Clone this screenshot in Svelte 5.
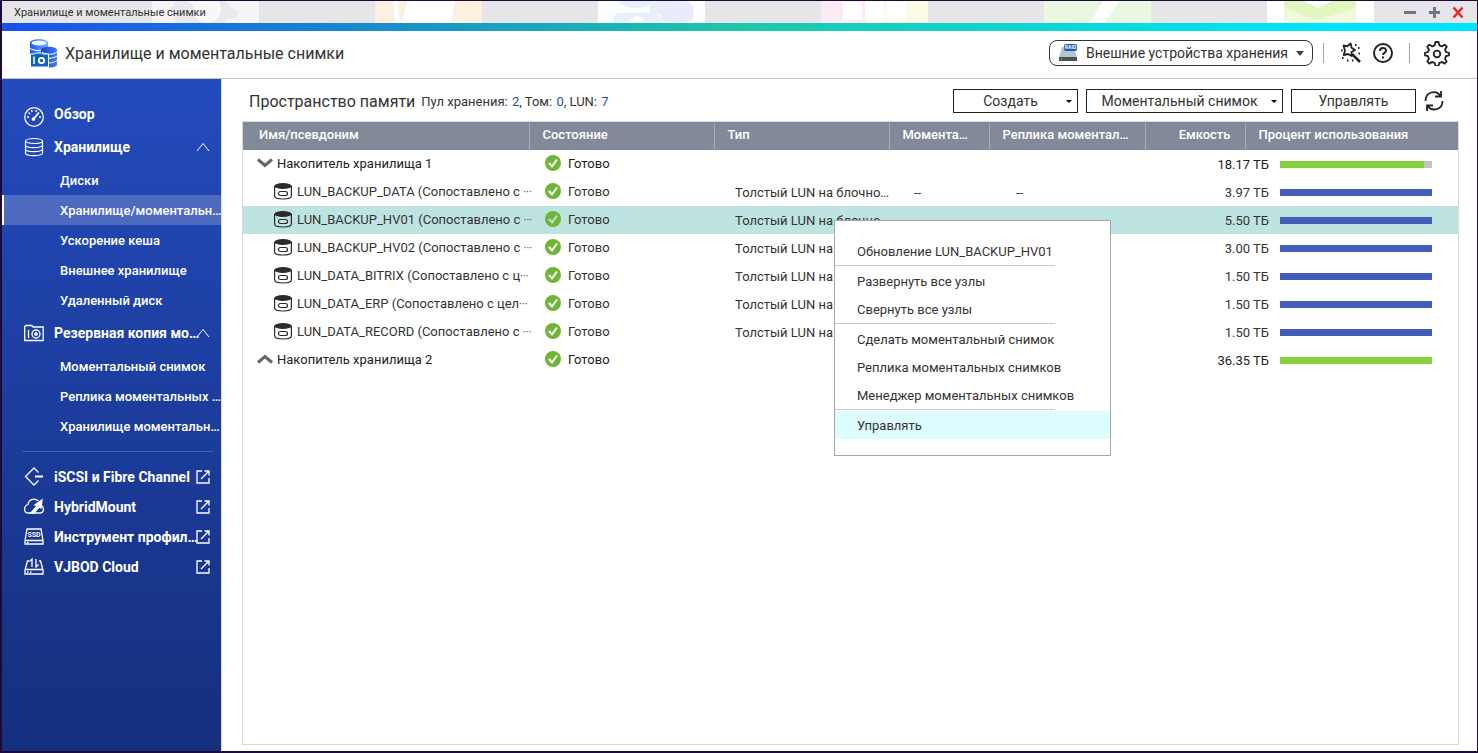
<script>
  // Storage & Snapshots window
  let selected = $state("LUN_BACKUP_HV01");
  let showMenu = $state(true);

  const storageItems = [
    "Диски",
    "Хранилище/моментальн…",
    "Ускорение кеша",
    "Внешнее хранилище",
    "Удаленный диск",
  ];
  let activeItem = $state(storageItems[1]);

  const backupItems = ["Моментальный снимок", "Реплика моментальных …", "Хранилище моментальн…"];

  const tools = [
    { icon: "iscsi", label: "iSCSI и Fibre Channel" },
    { icon: "cloud", label: "HybridMount" },
    { icon: "ssd", label: "Инструмент профил…" },
    { icon: "vjbod", label: "VJBOD Cloud" },
  ];

  const type = "Толстый LUN на блочно…";
  const rows = [
    { name: "Накопитель хранилища 1", pool: true, open: true, size: "18.17 ТБ", used: 95 },
    { name: "LUN_BACKUP_DATA", note: "(Сопоставлено с ", size: "3.97 ТБ", used: 100 },
    { name: "LUN_BACKUP_HV01", note: "(Сопоставлено с ", size: "5.50 ТБ", used: 100 },
    { name: "LUN_BACKUP_HV02", note: "(Сопоставлено с ", size: "3.00 ТБ", used: 100 },
    { name: "LUN_DATA_BITRIX", note: "(Сопоставлено с ц", size: "1.50 ТБ", used: 100 },
    { name: "LUN_DATA_ERP", note: "(Сопоставлено с цел", size: "1.50 ТБ", used: 100 },
    { name: "LUN_DATA_RECORD", note: "(Сопоставлено с ", size: "1.50 ТБ", used: 100 },
    { name: "Накопитель хранилища 2", pool: true, open: false, size: "36.35 ТБ", used: 100 },
  ];

  const menuGroups = [
    ["Обновление LUN_BACKUP_HV01"],
    ["Развернуть все узлы", "Свернуть все узлы"],
    ["Сделать моментальный снимок", "Реплика моментальных снимков", "Менеджер моментальных снимков"],
    ["Управлять"],
  ];

  function handleKeydown(event) {
    if (event.key === "Escape") {
      showMenu = false;
    }
  }
</script>

<svelte:window onkeydown={handleKeydown} />

{#snippet subItem(label)}
  <button class="sub-item" class:active={label === activeItem} onclick={() => (activeItem = label)}>
    {label}
  </button>
{/snippet}

{#snippet collapse()}
  <svg class="collapse" width="14" height="10" viewBox="0 0 14 10" fill="none" stroke="#fff">
    <path d="M1 9l6-7.500 6 7.500" />
  </svg>
{/snippet}

<div class="desktop">
  <div class="window">
    <div class="titlebar">
      <!-- desktop icons showing through the translucent bar -->
      <svg class="behind" width="1474" height="22" viewBox="2 1 1474 22">
        <path d="M152 1h107v22H152z" fill="#f5f5f5" />
        <path d="M174 1h12l6 4h16l6-4h12l4 6 9 4-3 7-9 1-3 4h-46l-4-6-4-2-2-5 6-5z" fill="#e9eaeb" />
        <circle cx="207" cy="9" r="14" fill="#f8f8f8" />
        <path d="M375 1h107v22H375z" fill="#fdf0e0" />
        <path d="M393 1h5l2 22h-5zM407 1h48l-4 22h-49z" fill="#fff" />
        <path d="M598 1h107v22H598z" fill="#fdfeff" />
        <path d="M619 1h34c0 4-8 7-17 7s-17-3-17-7z" fill="#e4f0ff" />
        <path d="M650 7c0-10 43-10 43 0v12c-4 5-32 5-32 0v-5h-11z" fill="#e9ecfc" />
        <path d="M613 23v-6l5-4h36l7 4v6z" fill="#e6f0f8" />
        <path d="M630 23c0-9 14-9 14 0z" fill="#fff" />
        <path d="M821 1h107v22H821z" fill="#fcfbe8" />
        <path d="M821 1h46v22h-46z" fill="#fcebf4" />
        <path d="M843 2h19v18h-19zM865 2h19v18h-19zM887 2h19v18h-19z" fill="#fff" />
        <path d="M1044 1h107v22h-107z" fill="#eaf7e2" />
        <path d="M1103 1h17l-16 22h-14z" fill="#fff" />
        <path d="M1267 1h107v22h-107z" fill="#fff" />
        <path d="M1284 1h72v22h-72z" fill="#f1fbdc" />
        <path d="M1284 1h72v7l-38 12-34-12z" fill="#e0f7bf" />
        <path d="M1304 1h28l-14 7z" fill="#fff" />
      </svg>
      <span class="caption">Хранилище и моментальные снимки</span>
      <div class="window-buttons">
        <button aria-label="Свернуть">
          <svg width="12" height="12" viewBox="0 0 12 12"><path d="M0 5h12v3H0z" fill="#6d7880" /></svg>
        </button>
        <button aria-label="Развернуть">
          <svg width="12" height="12" viewBox="0 0 12 12">
            <path d="M1 6.500h11M6.500 1v11" stroke="#6d7880" stroke-width="3" />
          </svg>
        </button>
        <button aria-label="Закрыть">
          <svg width="12" height="12" viewBox="0 0 12 12">
            <path d="M1.500 1.500l9 10M10.500 1.500l-9 10" stroke="#ee2525" stroke-width="2.500" />
          </svg>
        </button>
      </div>
    </div>
    <div class="stripe"></div>

    <header class="header">
      <svg width="28" height="29" viewBox="0 0 28 29">
        <defs>
          <linearGradient id="disk" x1="0" x2="1">
            <stop offset="0" stop-color="#1b5cf0" />
            <stop offset="1" stop-color="#63b4ff" />
          </linearGradient>
          <linearGradient id="disk2" x1="0" x2="1">
            <stop offset="0" stop-color="#1a45c4" />
            <stop offset="1" stop-color="#3f7dff" />
          </linearGradient>
        </defs>
        <path d="M1 4c0-5 18-5 18 0v13H1z" fill="url(#disk)" />
        <ellipse cx="10" cy="4" rx="7.500" ry="2.500" fill="#f2f8ff" />
        <path d="M1 9c3 3.500 15 3.500 18 0" fill="none" stroke="#fff" />
        <path d="M12 11c0-4.500 16-4.500 16 0v15c-1 2-6 3-9 2h-7z" fill="url(#disk2)" />
        <path d="M13 13c3 3 12 3 15 0M18 19.500c4 0 8-1 10-2.500M20 24c3 0 6-1 8-2.500" fill="none" stroke="#fff" />
        <path d="M1.500 15h4l1-1h6l1 1h6v13h-18z" fill="#1264b8" stroke="#fff" />
        <path d="M5 17.500v7.500" stroke="#fff" stroke-width="1.500" />
        <circle cx="12.500" cy="21.500" r="2.700" fill="none" stroke="#fff" stroke-width="1.800" />
      </svg>
      <h1>Хранилище и моментальные снимки</h1>

      <button class="external" aria-haspopup="menu">
        <svg width="20" height="20" viewBox="0 0 20 20">
          <path d="M4 4h12l3 11H1z" fill="#b8c3d0" />
          <path d="M1 14h18v4H1z" fill="#4c5159" />
          <path d="M3 16h1" stroke="#7fe040" />
          <rect x="6" y="1" width="13" height="7" rx="2" fill="#1d5fb4" />
          <text x="12.500" y="6" text-anchor="middle" class="tiny" fill="#fff">RAID</text>
        </svg>
        <span>Внешние устройства хранения</span>
        <svg width="8" height="5" viewBox="0 0 8 5"><path d="M0 0h8L4 5z" fill="#444" /></svg>
      </button>
      <i class="divider"></i>
      <div class="pair">
        <button class="icon-btn" aria-label="Мастер">
          <svg width="22" height="22" viewBox="0 0 22 22" fill="none" stroke="#222" stroke-width="1.800">
            <path
              d="M3.500 3.500l3.700.8 3.500-2.800.8 4.200 3.500 2.300-3.500 2 .2 4-3.700-2-4.300 1 1.300-4.300z"
              stroke-linejoin="round"
            />
            <path d="M12 12l8 8" stroke-width="2.500" />
            <path d="M15 3h1.500M18 6h1.500M18.500 11.500H20M2 16h1.500M7 18.500h1.500M12 18.500h1.500M1 8.500h1.500" />
          </svg>
        </button>
        <button class="icon-btn" aria-label="Справка">
          <svg width="22" height="22" viewBox="0 0 22 22" fill="none" stroke="#222" stroke-width="2">
            <circle cx="11" cy="11" r="9" />
            <path d="M8 9c0-4 6-4 6-.5 0 2.500-3 2.200-3 4.500" />
            <path d="M11 14.500v2" />
          </svg>
        </button>
      </div>
      <i class="divider last"></i>
      <button class="icon-btn" aria-label="Параметры">
        <svg width="26" height="26" viewBox="0 0 26 26" fill="none" stroke="#222" stroke-width="1.800" stroke-linejoin="round">
          <path
            d="M11.500 2h3l.8 3.300c1 .3 1.600.6 2.400 1.100l3-1.700 2 2-1.700 3c.5.800.8 1.500 1 2.300l3 .8v2.600l-3 .8c-.2.900-.5 1.600-1 2.400l1.700 3-2 2-3-1.700c-.8.5-1.500.8-2.400 1l-.8 3.100h-3l-.8-3.100c-.9-.2-1.600-.5-2.400-1l-3 1.700-2-2 1.700-3c-.5-.8-.8-1.500-1-2.400l-3-.8v-2.600l3-.8c.2-.8.5-1.500 1-2.300l-1.700-3 2-2 3 1.700c.8-.5 1.400-.8 2.400-1.100z"
          />
          <circle cx="13" cy="14" r="3.300" />
        </svg>
      </button>
    </header>

    <div class="body">
      <nav class="sidebar">
        <button class="item first">
          <svg width="22" height="22" viewBox="0 0 22 22" fill="none" stroke="#fff" stroke-width="1.300">
            <circle cx="11" cy="11" r="9.300" />
            <path d="M4 11h2M5.500 6.500L7 8M8.500 4l.7 2M13.500 4l-.7 2M16 11h2" />
            <path d="M11 12.500l5-6" stroke-width="1.800" />
            <circle cx="10.500" cy="13" r="1.200" fill="#fff" />
          </svg>
          <span>Обзор</span>
        </button>
        <button class="item">
          <svg width="22" height="22" viewBox="0 0 22 22" fill="none" stroke="#fff" stroke-width="1.200">
            <ellipse cx="11" cy="5" rx="8.500" ry="2.500" />
            <path d="M2.500 5v12c0 3.500 17 3.500 17 0V5M2.500 9c0 3.500 17 3.500 17 0M2.500 13c0 3.500 17 3.500 17 0" />
          </svg>
          <span>Хранилище</span>
          {@render collapse()}
        </button>
        {#each storageItems as label}
          {@render subItem(label)}
        {/each}
        <button class="item">
          <svg width="22" height="22" viewBox="0 0 22 22" fill="none" stroke="#fff" stroke-width="1.300">
            <path d="M1.700 18.500V4.500l1-1h6l1.500 1.500h10v13.500zM5.500 8v8" />
            <circle cx="13" cy="12" r="4" />
            <circle cx="13" cy="12" r="1.200" fill="#fff" />
          </svg>
          <span>Резервная копия мо…</span>
          {@render collapse()}
        </button>
        {#each backupItems as label}
          {@render subItem(label)}
        {/each}
        <hr />
        {#each tools as tool}
          <a class="item tool" href="#{tool.icon}">
            <svg width="22" height="22" viewBox="0 0 22 22" fill="none" stroke="#fff" stroke-width="1.300">
              {#if tool.icon === "iscsi"}
                <path d="M15.500 6.500L11 2l-8.500 8.500L11 19l4.500-4.500" />
                <path d="M12 10.500h8" stroke-width="2" />
              {:else if tool.icon === "cloud"}
                <path d="M15.500 5C11 1.500 5.500 3.500 5 8.500c-4.500 1.500-4.500 8 0 8.500h3M18.500 9.500c3 2 2.500 7-1 7.500H9" />
                <path d="M8 17l6-7-2-1 7-5-1 8-2-1-5 6z" fill="#fff" />
              {:else if tool.icon === "ssd"}
                <path d="M4 3h14l2 11.500V18H2v-3.500zM2 14.500h18M4 16.300h1.500" />
                <text x="11" y="11" text-anchor="middle" class="ssd" fill="#fff" stroke="none">SSD</text>
              {:else}
                <path d="M6 5H4.500L2 14v4h18v-4L17.500 5H16M2 13.500h18M4 16h1.500M7 16h1.500" />
                <path d="M9 11V3L6.500 5.500M13 3v8l2.500-2.500" />
              {/if}
            </svg>
            <span>{tool.label}</span>
            <svg class="open" width="14" height="14" viewBox="0 0 14 14" fill="none" stroke="#fff" stroke-width="1.300">
              <path d="M6 1H1v12h12V8M8.500 1H13v4.500M13 1L5 9" />
            </svg>
          </a>
        {/each}
      </nav>

      <main class="content">
        <div class="toolbar">
          <h2>Пространство памяти</h2>
          <p>
            Пул хранения: <a href="#pools">2</a>, Том: <a href="#volumes">0</a>, LUN: <a href="#luns">7</a>
          </p>
          <div class="actions">
            <button class="btn has-arrow" aria-haspopup="menu">Создать</button>
            <button class="btn has-arrow wide" aria-haspopup="menu">Моментальный снимок</button>
            <button class="btn">Управлять</button>
            <button class="icon-btn" aria-label="Обновить">
              <svg width="20" height="24" viewBox="0 0 20 24" fill="none" stroke="#222" stroke-width="1.800">
                <path d="M1.500 12C1.500 3 12 0 16.500 7M17 2v5.500h-6" />
                <path d="M18.500 12c0 9-10.500 11-15 5M3 22v-5.500h6" />
              </svg>
            </button>
          </div>
        </div>

        <div class="grid">
          <table>
            <colgroup>
              <col class="c-name" />
              <col class="c-state" />
              <col class="c-type" />
              <col class="c-snap" />
              <col class="c-replica" />
              <col class="c-size" />
              <col />
            </colgroup>
            <thead>
              <tr>
                <th class="name-head">Имя/псевдоним</th>
                <th>Состояние</th>
                <th>Тип</th>
                <th>Момента…</th>
                <th>Реплика моментал…</th>
                <th class="size-head">Емкость</th>
                <th>Процент использования</th>
              </tr>
            </thead>
            <tbody>
              {#each rows as row}
                <tr
                  class:pool={row.pool}
                  class:selected={row.name === selected}
                  onclick={() => (selected = row.name)}
                >
                  <td>
                    <div class="name" class:lun={!row.pool}>
                      {#if row.pool}
                        <svg width="16" height="10" viewBox="0 0 16 10" fill="none" stroke="#666" stroke-width="3">
                          <path d={row.open ? "M1 1.500l7 6 7-6" : "M1 8.500l7-6 7 6"} />
                        </svg>
                        <span>{row.name}</span>
                      {:else}
                        <svg width="18" height="18" viewBox="0 0 18 18" fill="none" stroke="#2b2b2b" stroke-width="1.200">
                          <path d="M.6 4v10c0 4 16.800 4 16.800 0V4" />
                          <ellipse cx="9" cy="4" rx="8.800" ry="3" fill="#2b2b2b" stroke="none" />
                          <rect x="4.500" y="9.500" width="9" height="4" rx="2" />
                        </svg>
                        <span>{row.name} {row.note}<small>···</small></span>
                      {/if}
                    </div>
                  </td>
                  <td>
                    <div class="state">
                      <svg width="16" height="16" viewBox="0 0 16 16">
                        <circle cx="8" cy="8" r="8" fill="#6fb536" />
                        <path
                          d="M4 8l3 3.500 5-7"
                          fill="none"
                          stroke={row.name === selected ? "#bee4e2" : "#fff"}
                          stroke-width="2"
                        />
                      </svg>
                      <span>Готово</span>
                    </div>
                  </td>
                  <td class="type">{row.pool ? "" : type}</td>
                  <td class="snap">{row.pool ? "" : "--"}</td>
                  <td class="replica">{row.pool ? "" : "--"}</td>
                  <td class="size"><div>{row.size}</div></td>
                  <td class="usage">
                    <div class="bar"><div class="fill" style="width: {row.used}%"></div></div>
                  </td>
                </tr>
              {/each}
            </tbody>
          </table>
        </div>
      </main>
    </div>
  </div>

  {#if showMenu}
    <div class="menu" role="menu">
      {#each menuGroups as group}
        <div class="group">
          {#each group as label}
            <button role="menuitem" class:hover={label === "Управлять"} onclick={() => (showMenu = false)}>
              {label}
            </button>
          {/each}
        </div>
      {/each}
    </div>
  {/if}
</div>

<style>
  :global(body) {
    margin: 0;
  }

  .desktop {
    position: relative;
    box-sizing: border-box;
    display: flex;
    min-height: 100vh;
    padding: 1px 1px 2px 2px;
    background: #1c0a38;
    font-family: Roboto, "Noto Sans", sans-serif;
    font-size: 13px;
    color: #333;
  }

  .window {
    flex: 1;
    min-width: 0;
    display: flex;
    flex-direction: column;
    background: #fff;
  }

  button {
    margin: 0;
    padding: 0;
    border: none;
    background: none;
    font: inherit;
    color: inherit;
    cursor: pointer;
  }

  svg {
    display: block;
    flex: none;
  }

  .titlebar {
    position: relative;
    display: flex;
    align-items: center;
    justify-content: space-between;
    height: 22px;
    padding: 0 13px 0 12px;
    background: #e6e5ea;
    overflow: hidden;
  }

  .behind {
    position: absolute;
    left: 0;
    top: 0;
  }

  .caption {
    position: relative;
    font-size: 11px;
  }

  .window-buttons {
    position: relative;
    display: flex;
    gap: 12px;
  }

  .stripe {
    height: 8px;
    background: linear-gradient(to right, #1650f0, #1cc8a8 50%, #00e4ff 90%);
  }

  .header {
    display: flex;
    align-items: center;
    height: 44px;
    padding: 0 27px 3px;
    border-bottom: 1px solid #c4c4c4;
  }

  h1 {
    margin: 0 auto 0 8px;
    font-size: 16px;
    font-weight: 400;
  }

  .external {
    box-sizing: border-box;
    display: flex;
    align-items: center;
    gap: 8px;
    height: 26px;
    padding: 0 8px;
    border: 1px solid #333;
    border-radius: 8px;
    font-size: 14px;
  }

  .tiny {
    font-size: 5px;
    font-weight: 700;
  }

  .ssd {
    font-size: 7px;
    font-weight: 700;
  }

  .divider {
    width: 1px;
    height: 20px;
    margin: 0 16px 0 10px;
    background: #a9a694;
  }

  .divider.last {
    margin: 0 14px 0 15px;
  }

  .pair {
    display: flex;
    gap: 10px;
  }

  .body {
    flex: 1;
    display: flex;
  }

  .sidebar {
    box-sizing: border-box;
    flex: none;
    width: 219px;
    padding-top: 20px;
    background: linear-gradient(#244bbd, #152f7d);
    color: #fff;
  }

  .item {
    box-sizing: border-box;
    display: flex;
    align-items: center;
    gap: 9px;
    width: 100%;
    height: 36px;
    padding: 0 11px 0 21px;
    font-size: 14px;
    font-weight: 700;
    color: #fff;
    text-align: left;
    text-decoration: none;
    white-space: nowrap;
  }

  .item.first,
  .item.tool {
    height: 30px;
  }

  .item.first svg {
    margin-top: 6px;
  }

  .item span {
    flex: 1;
    min-width: 0;
  }

  .item .collapse,
  .item .open {
    margin-left: -9px;
  }

  .sub-item {
    box-sizing: border-box;
    display: block;
    width: 100%;
    height: 30px;
    padding-left: 58px;
    color: #fff;
    font-weight: 500;
    text-align: left;
    white-space: nowrap;
  }

  .sub-item.active {
    padding-left: 56px;
    border-left: 2px solid #fff;
    background: rgba(255, 255, 255, 0.2);
  }

  hr {
    margin: 10px 8px 10px 20px;
    border: none;
    border-top: 1px solid #4560ab;
  }

  .content {
    flex: 1;
    min-width: 0;
    display: flex;
    flex-direction: column;
    padding: 10px 18px 6px 20px;
    border-left: 1px solid #dcdcdc;
  }

  .toolbar {
    display: flex;
    align-items: center;
    height: 24px;
    padding: 0 15px 8px 7px;
  }

  h2 {
    margin: 0;
    font-size: 16px;
    font-weight: 400;
  }

  p {
    margin: 0 0 0 6px;
  }

  p a {
    padding-left: 1px;
    color: #1f4fa0;
    text-decoration: none;
  }

  .actions {
    display: flex;
    align-items: center;
    gap: 8px;
    margin-left: auto;
  }

  .btn {
    position: relative;
    box-sizing: border-box;
    width: 125px;
    height: 24px;
    border: 1px solid #222;
    font-size: 14px;
  }

  .btn.wide {
    width: 197px;
  }

  .btn.has-arrow {
    padding-right: 10px;
  }

  .btn.has-arrow::after {
    content: "";
    position: absolute;
    right: 5px;
    top: 10px;
    border: 3px solid transparent;
    border-top-color: #000;
  }

  .grid {
    flex: 1;
    border: 1px solid #dadada;
  }

  table {
    width: 100%;
    table-layout: fixed;
    border-collapse: collapse;
  }

  .c-name {
    width: 286px;
  }

  .c-state {
    width: 185px;
  }

  .c-type {
    width: 175px;
  }

  .c-snap,
  .c-size {
    width: 100px;
  }

  .c-replica {
    width: 156px;
  }

  th {
    box-sizing: border-box;
    height: 28px;
    padding: 0 8px 4px 13px;
    border-right: 1px solid #a6abb8;
    background: #828998;
    color: #fff;
    font-weight: 500;
    text-align: left;
    white-space: nowrap;
  }

  th:last-child {
    border-right: none;
  }

  .name-head {
    padding-left: 16px;
  }

  .size-head {
    padding-right: 14px;
    text-align: right;
  }

  td {
    box-sizing: border-box;
    height: 28px;
    padding: 0;
    white-space: nowrap;
  }

  .selected {
    background: #bee4e2;
  }

  .name,
  .state {
    display: flex;
    align-items: center;
    padding-bottom: 2px;
  }

  .name {
    gap: 4px;
    padding-left: 14px;
  }

  .name.lun {
    gap: 5px;
    padding-left: 31px;
  }

  small {
    font-size: 11px;
  }

  .state {
    gap: 7px;
    padding-left: 16px;
  }

  .type {
    padding-left: 21px;
  }

  .snap {
    padding-left: 25px;
  }

  .replica {
    padding-left: 27px;
  }

  .size {
    text-align: right;
  }

  /* values run past the column edge, up to the bar */
  .size div {
    margin-right: -24px;
  }

  .usage {
    padding: 0 26px 0 35px;
  }

  .bar {
    height: 7px;
    background: #c4c4c4;
  }

  .fill {
    height: 100%;
    background: #435db9;
  }

  .pool .fill {
    background: #84d03f;
  }

  .pool {
    color: #222;
  }

  .menu {
    position: absolute;
    left: 834px;
    top: 220px;
    box-sizing: border-box;
    width: 277px;
    padding: 16px 0;
    border: 1px solid #a8a8a8;
    background: #fff;
  }

  .menu button {
    display: block;
    width: 100%;
    height: 28px;
    padding-left: 22px;
    text-align: left;
  }

  .menu button.hover,
  .menu button:hover {
    background: #dcfcfd;
  }

  .group:not(:last-child)::after {
    content: "";
    display: block;
    width: 220px;
    margin-bottom: 1px;
    border-top: 1px solid #c8c8c8;
  }
</style>
